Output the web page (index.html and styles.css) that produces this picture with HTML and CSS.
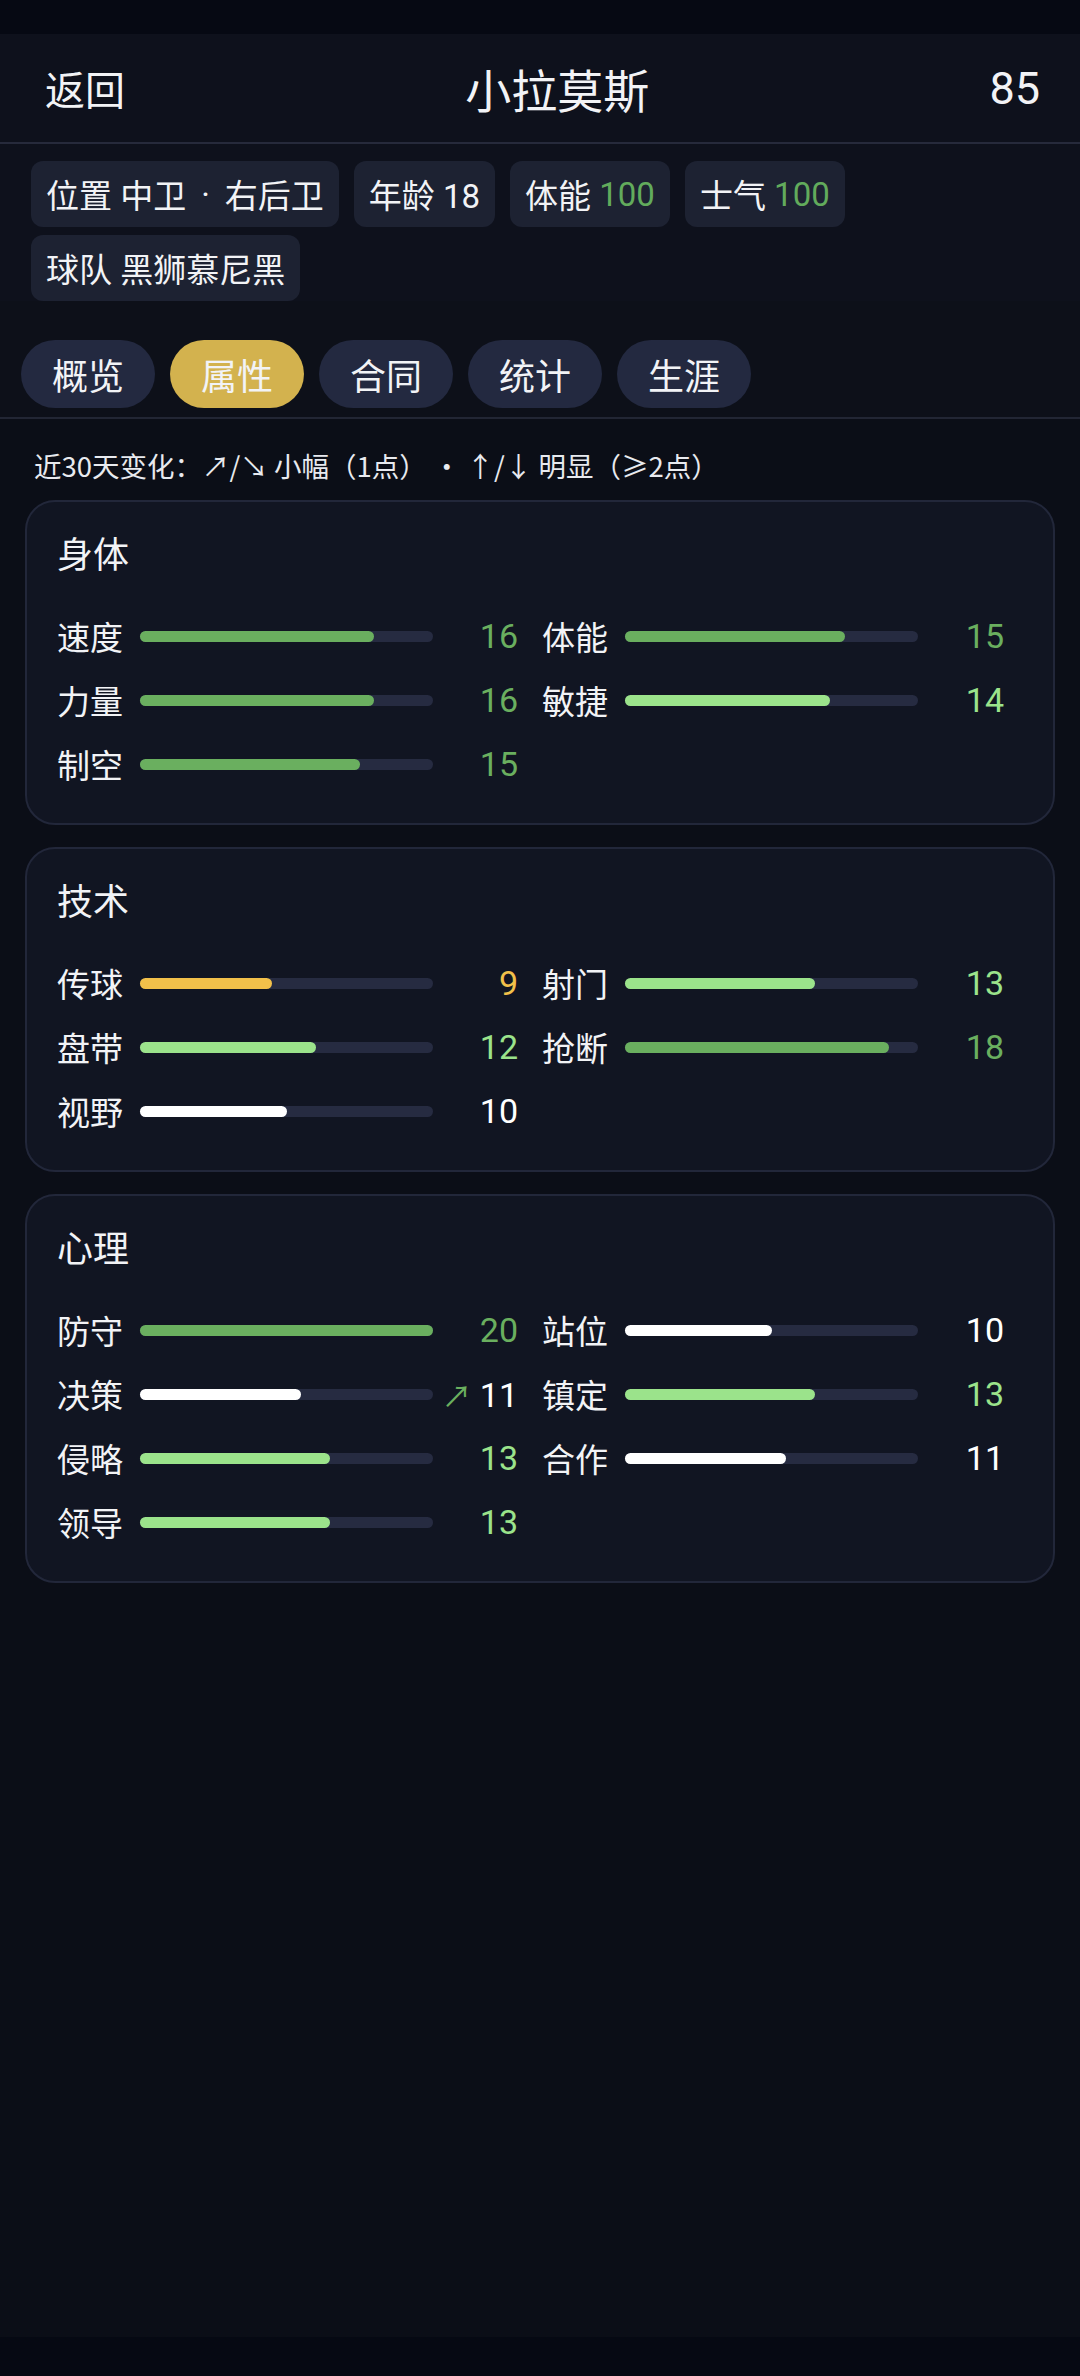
FILE: index.html
```html
<!DOCTYPE html>
<html lang="zh">
<head>
<meta charset="utf-8">
<link rel="stylesheet" href="styles.css">
</head>
<body>
<div class="page">
  <div class="status"></div>
  <div class="top">
    <header class="topbar">
      <span class="back">返回</span>
      <span class="title">小拉莫斯</span>
      <span class="score">85</span>
    </header>
    <div class="chips">
      <span class="chip">位置 中卫<span class="dot">·</span>右后卫</span>
      <span class="chip">年龄 18</span>
      <span class="chip">体能 <em class="g">100</em></span>
      <span class="chip">士气 <em class="g">100</em></span>
      <span class="chip">球队 黑狮慕尼黑</span>
    </div>
    <nav class="tabs">
      <span class="tab">概览</span>
      <span class="tab active">属性</span>
      <span class="tab">合同</span>
      <span class="tab">统计</span>
      <span class="tab">生涯</span>
    </nav>
  </div>

  <p class="legend">近30天变化：↗/↘ 小幅（1点） · ↑/↓ 明显（≥2点）</p>

  <section class="card">
    <h2 class="card-title">身体</h2>
    <div class="grid">
      <div class="stat"><span class="lab">速度</span><span class="track"><span class="fill dg" style="width:80%"></span></span><span class="val dg-t">16</span></div>
      <div class="stat"><span class="lab">体能</span><span class="track"><span class="fill dg" style="width:75%"></span></span><span class="val dg-t">15</span></div>
      <div class="stat"><span class="lab">力量</span><span class="track"><span class="fill dg" style="width:80%"></span></span><span class="val dg-t">16</span></div>
      <div class="stat"><span class="lab">敏捷</span><span class="track"><span class="fill lg" style="width:70%"></span></span><span class="val lg-t">14</span></div>
      <div class="stat"><span class="lab">制空</span><span class="track"><span class="fill dg" style="width:75%"></span></span><span class="val dg-t">15</span></div>
    </div>
  </section>

  <section class="card">
    <h2 class="card-title">技术</h2>
    <div class="grid">
      <div class="stat"><span class="lab">传球</span><span class="track"><span class="fill yl" style="width:45%"></span></span><span class="val yl-t">9</span></div>
      <div class="stat"><span class="lab">射门</span><span class="track"><span class="fill lg" style="width:65%"></span></span><span class="val lg-t">13</span></div>
      <div class="stat"><span class="lab">盘带</span><span class="track"><span class="fill lg" style="width:60%"></span></span><span class="val lg-t">12</span></div>
      <div class="stat"><span class="lab">抢断</span><span class="track"><span class="fill dg" style="width:90%"></span></span><span class="val dg-t">18</span></div>
      <div class="stat"><span class="lab">视野</span><span class="track"><span class="fill wh" style="width:50%"></span></span><span class="val wh-t">10</span></div>
    </div>
  </section>

  <section class="card">
    <h2 class="card-title">心理</h2>
    <div class="grid">
      <div class="stat"><span class="lab">防守</span><span class="track"><span class="fill dg" style="width:100%"></span></span><span class="val dg-t">20</span></div>
      <div class="stat"><span class="lab">站位</span><span class="track"><span class="fill wh" style="width:50%"></span></span><span class="val wh-t">10</span></div>
      <div class="stat"><span class="lab">决策</span><span class="track"><span class="fill wh" style="width:55%"></span></span><span class="val wh-t"><span class="up">↗</span>11</span></div>
      <div class="stat"><span class="lab">镇定</span><span class="track"><span class="fill lg" style="width:65%"></span></span><span class="val lg-t">13</span></div>
      <div class="stat"><span class="lab">侵略</span><span class="track"><span class="fill lg" style="width:65%"></span></span><span class="val lg-t">13</span></div>
      <div class="stat"><span class="lab">合作</span><span class="track"><span class="fill wh" style="width:55%"></span></span><span class="val wh-t">11</span></div>
      <div class="stat"><span class="lab">领导</span><span class="track"><span class="fill lg" style="width:65%"></span></span><span class="val lg-t">13</span></div>
    </div>
  </section>

  <div class="spacer"></div>
  <div class="navbar"></div>
</div>
</body>
</html>
```

FILE: styles.css
```css
* { box-sizing: border-box; }
html, body { margin: 0; padding: 0; }
body {
  background: #0b0e17;
  color: #f2f3f6;
  font-family: "Roboto", "Noto Sans CJK SC", sans-serif;
}
.page {
  display: flex;
  flex-direction: column;
  height: 2376px;
}
.status { height: 34px; background: #060913; flex: none; }
.top { background: #0d1019; flex: none; }
.topbar {
  height: 110px;
  display: flex;
  align-items: center;
  justify-content: space-between;
  padding: 0 40px 0 45px;
  background: #0e111c;
  border-bottom: 2px solid #262a3b;
}
.back { font-size: 40px; }
.title { font-size: 46px; }
.score { font-size: 45px; }

.chips {
  display: flex;
  flex-wrap: wrap;
  gap: 8px 15px;
  padding: 17px 31px 0;
  background: #0e111c;
}
.chip {
  height: 66px;
  display: inline-flex;
  align-items: center;
  padding: 0 15px;
  background: #1d2232;
  border-radius: 12px;
  font-size: 33px;
  white-space: pre;
}
.chip .dot { margin: 0 15px; }
.chip em { font-style: normal; }
.g { color: #62ab5c; }

.tabs {
  display: flex;
  gap: 15px;
  padding: 39px 21px 9px;
  border-bottom: 2px solid #222634;
}
.tab {
  height: 68px;
  padding: 0 31px;
  display: inline-flex;
  align-items: center;
  border-radius: 34px;
  background: #232940;
  font-size: 36px;
}
.tab.active { background: #d3b24e; }

.legend {
  margin: 28px 0 17px 34px;
  font-family: "Noto Sans CJK SC", sans-serif;
  font-size: 27.5px;
  line-height: 36px;
  color: #e8eaef;
}

.card {
  margin: 0 25px 22px;
  background: #111522;
  border: 2px solid #22273a;
  border-radius: 30px;
  padding: 29px 30px 27px;
  flex: none;
}
.card-title {
  margin: 0 0 23px;
  font-size: 36px;
  line-height: 50px;
  font-weight: 400;
}
.grid {
  display: grid;
  grid-template-columns: 461px 462px;
  column-gap: 24px;
}
.stat {
  height: 64px;
  display: flex;
  align-items: center;
}
.lab {
  width: 66px;
  font-size: 33px;
  white-space: nowrap;
  flex: none;
}
.track {
  margin-left: 17px;
  width: 293px;
  height: 11px;
  border-radius: 6px;
  background: #262b41;
  flex: none;
  display: flex;
}
.fill { height: 100%; border-radius: 6px; }
.val {
  flex: 1;
  text-align: right;
  font-size: 34px;
}
.up {
  color: #6aaf5f;
  margin-right: 8px;
  font-size: 30px;
  font-family: "Noto Sans CJK SC", sans-serif;
}
.dg { background: #6aaf5f; }
.lg { background: #9be38b; }
.yl { background: #f2c04a; }
.wh { background: #ffffff; }
.dg-t { color: #6aaf5f; }
.lg-t { color: #9be38b; }
.yl-t { color: #f2c04a; }
.wh-t { color: #ffffff; }

.spacer { flex: 1; }
.navbar { height: 39px; background: #060913; flex: none; }
```
